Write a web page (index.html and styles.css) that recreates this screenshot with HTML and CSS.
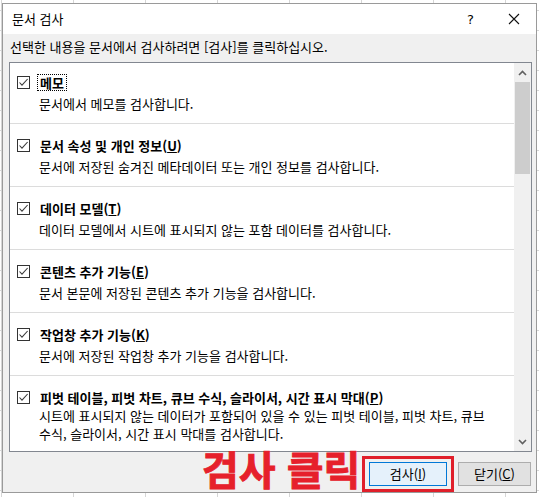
FILE: index.html
```html
<!DOCTYPE html>
<html lang="ko">
<head>
<meta charset="utf-8">
<title>문서 검사</title>
<link rel="stylesheet" href="styles.css">
</head>
<body>
<div class="dialog">
  <div class="titlebar">
    <span class="title">문서 검사</span>
    <span class="help">?</span>
    <svg class="close" width="12" height="12" viewBox="0 0 12 12"><path d="M1 1L11 11M11 1L1 11" stroke="#111" stroke-width="1.1" fill="none"/></svg>
  </div>
  <div class="prompt">선택한 내용을 문서에서 검사하려면 [검사]를 클릭하십시오.</div>
  <div class="listbox">
    <div class="items">
      <div class="item first">
        <div class="head"><span class="cb"><svg width="11" height="11" viewBox="0 0 11 11"><path d="M1.5 5.5L4 8.2L9.6 2" stroke="#3c3c3c" stroke-width="1.1" fill="none"/></svg></span><span class="label focus">메모</span></div>
        <div class="desc">문서에서 메모를 검사합니다.</div>
      </div>
      <div class="item">
        <div class="head"><span class="cb"><svg width="11" height="11" viewBox="0 0 11 11"><path d="M1.5 5.5L4 8.2L9.6 2" stroke="#3c3c3c" stroke-width="1.1" fill="none"/></svg></span><span class="label">문서 속성 및 개인 정보(<u>U</u>)</span></div>
        <div class="desc">문서에 저장된 숨겨진 메타데이터 또는 개인 정보를 검사합니다.</div>
      </div>
      <div class="item">
        <div class="head"><span class="cb"><svg width="11" height="11" viewBox="0 0 11 11"><path d="M1.5 5.5L4 8.2L9.6 2" stroke="#3c3c3c" stroke-width="1.1" fill="none"/></svg></span><span class="label">데이터 모델(<u>T</u>)</span></div>
        <div class="desc">데이터 모델에서 시트에 표시되지 않는 포함 데이터를 검사합니다.</div>
      </div>
      <div class="item">
        <div class="head"><span class="cb"><svg width="11" height="11" viewBox="0 0 11 11"><path d="M1.5 5.5L4 8.2L9.6 2" stroke="#3c3c3c" stroke-width="1.1" fill="none"/></svg></span><span class="label">콘텐츠 추가 기능(<u>E</u>)</span></div>
        <div class="desc">문서 본문에 저장된 콘텐츠 추가 기능을 검사합니다.</div>
      </div>
      <div class="item">
        <div class="head"><span class="cb"><svg width="11" height="11" viewBox="0 0 11 11"><path d="M1.5 5.5L4 8.2L9.6 2" stroke="#3c3c3c" stroke-width="1.1" fill="none"/></svg></span><span class="label">작업창 추가 기능(<u>K</u>)</span></div>
        <div class="desc">문서에 저장된 작업창 추가 기능을 검사합니다.</div>
      </div>
      <div class="item">
        <div class="head"><span class="cb"><svg width="11" height="11" viewBox="0 0 11 11"><path d="M1.5 5.5L4 8.2L9.6 2" stroke="#3c3c3c" stroke-width="1.1" fill="none"/></svg></span><span class="label">피벗 테이블, 피벗 차트, 큐브 수식, 슬라이서, 시간 표시 막대(<u>P</u>)</span></div>
        <div class="desc two">시트에 표시되지 않는 데이터가 포함되어 있을 수 있는 피벗 테이블, 피벗 차트, 큐브</div>
        <div class="desc cont">수식, 슬라이서, 시간 표시 막대를 검사합니다.</div>
      </div>
    </div>
    <div class="scrollbar">
      <div class="arrow"><svg width="9" height="6" viewBox="0 0 9 6"><path d="M1 5L4.5 1.5L8 5" stroke="#606060" stroke-width="1.6" fill="none"/></svg></div>
      <div class="thumb"></div>
      <div class="track"></div>
      <div class="arrow"><svg width="9" height="6" viewBox="0 0 9 6"><path d="M1 1L4.5 4.5L8 1" stroke="#606060" stroke-width="1.6" fill="none"/></svg></div>
    </div>
  </div>
  <div class="footer">
    <button class="btn primary">검사(<u>I</u>)</button>
    <button class="btn">닫기(<u>C</u>)</button>
  </div>
</div>
<div class="callout-text">검사 클릭</div>
<div class="callout-box"></div>
</body>
</html>
```

FILE: styles.css
```css
html, body {
  margin: 0;
  padding: 0;
}
body {
  width: 539px;
  height: 497px;
  overflow: hidden;
  position: relative;
  font-family: "Noto Sans CJK KR", "Noto Sans", sans-serif;
  font-size: 13px;
  color: #000;
  background-color: #fff;
  background-image:
    linear-gradient(to right, #d6d6d6 1px, transparent 1px),
    linear-gradient(to bottom, #d6d6d6 1px, transparent 1px);
  background-size: 72px 20px;
  background-position: 1px 0, 0 10px;
}
.dialog {
  margin: 3px 0 0 2px;
  width: 533px;
  height: 488px;
  border: 1px solid #9a9a9a;
  background: #f0f0f0;
  display: flex;
  flex-direction: column;
}
.titlebar {
  height: 30px;
  background: #fff;
  display: flex;
  align-items: center;
  padding-left: 9px;
  flex-shrink: 0;
}
.title {
  flex: 1;
  line-height: 16px;
}
.help {
  font-family: "DejaVu Sans", sans-serif;
  font-size: 13px;
  margin-right: 34px;
}
.close {
  margin-right: 16px;
}
.prompt {
  padding: 5px 0 0 7px;
  line-height: 16px;
  height: 16px;
  margin-bottom: 7px;
  flex-shrink: 0;
}
.listbox {
  margin-left: 6px;
  width: 521px;
  height: 388px;
  border: 1px solid #828790;
  background: #fff;
  display: flex;
  flex-shrink: 0;
}
.items {
  flex: 1;
  overflow: hidden;
}
.item {
  border-top: 1px solid #dcdcdc;
  padding: 13px 0 12px 7px;
}
.item.first {
  border-top: none;
  padding-top: 11px;
}
.head {
  display: flex;
  align-items: center;
  height: 16px;
}
.cb {
  width: 11px;
  height: 11px;
  border: 1px solid #333;
  display: flex;
  flex-shrink: 0;
  background: #fff;
}
.label {
  font-weight: bold;
  margin-left: 7px;
  padding: 0 2px;
  line-height: 15px;
  white-space: nowrap;
  border: 1px dotted transparent;
}
.label.focus {
  border-color: #000;
}
.desc {
  margin-top: 6px;
  padding-left: 22px;
  line-height: 15px;
  white-space: nowrap;
}
.desc.two {
  margin-top: 2px;
  line-height: 18px;
}
.desc.cont {
  margin-top: 0;
  line-height: 18px;
}
.scrollbar {
  width: 17px;
  background: #f0f0f0;
  display: flex;
  flex-direction: column;
}
.arrow {
  height: 19px;
  display: flex;
  align-items: center;
  justify-content: center;
}
.thumb {
  height: 92px;
  margin: 0 1px;
  background: #cdcdcd;
}
.track {
  flex: 1;
}
.footer {
  display: flex;
  justify-content: flex-end;
  gap: 11px;
  padding: 10px 5px 0 0;
}
.btn {
  font-family: "Noto Sans CJK KR", "Noto Sans", sans-serif;
  font-size: 13px;
  height: 24px;
  padding: 0;
  margin: 0;
  background: #e1e1e1;
  border: 1px solid #adadad;
  color: #000;
  line-height: 20px;
  width: 73px;
}
.btn.primary {
  width: 78px;
  background: #e5f1fb;
  border: 1px solid #0078d7;
  box-shadow: inset 0 0 0 1px #e5f1fb;
}
.callout-text {
  position: absolute;
  left: 202px;
  top: 444px;
  font-size: 40px;
  font-weight: bold;
  line-height: 48px;
  color: #e6202b;
  -webkit-text-stroke: 0.9px #e6202b;
  white-space: nowrap;
}
.callout-box {
  position: absolute;
  left: 362px;
  top: 456px;
  width: 86px;
  height: 30px;
  border: 3px solid #e01f2a;
}
```
